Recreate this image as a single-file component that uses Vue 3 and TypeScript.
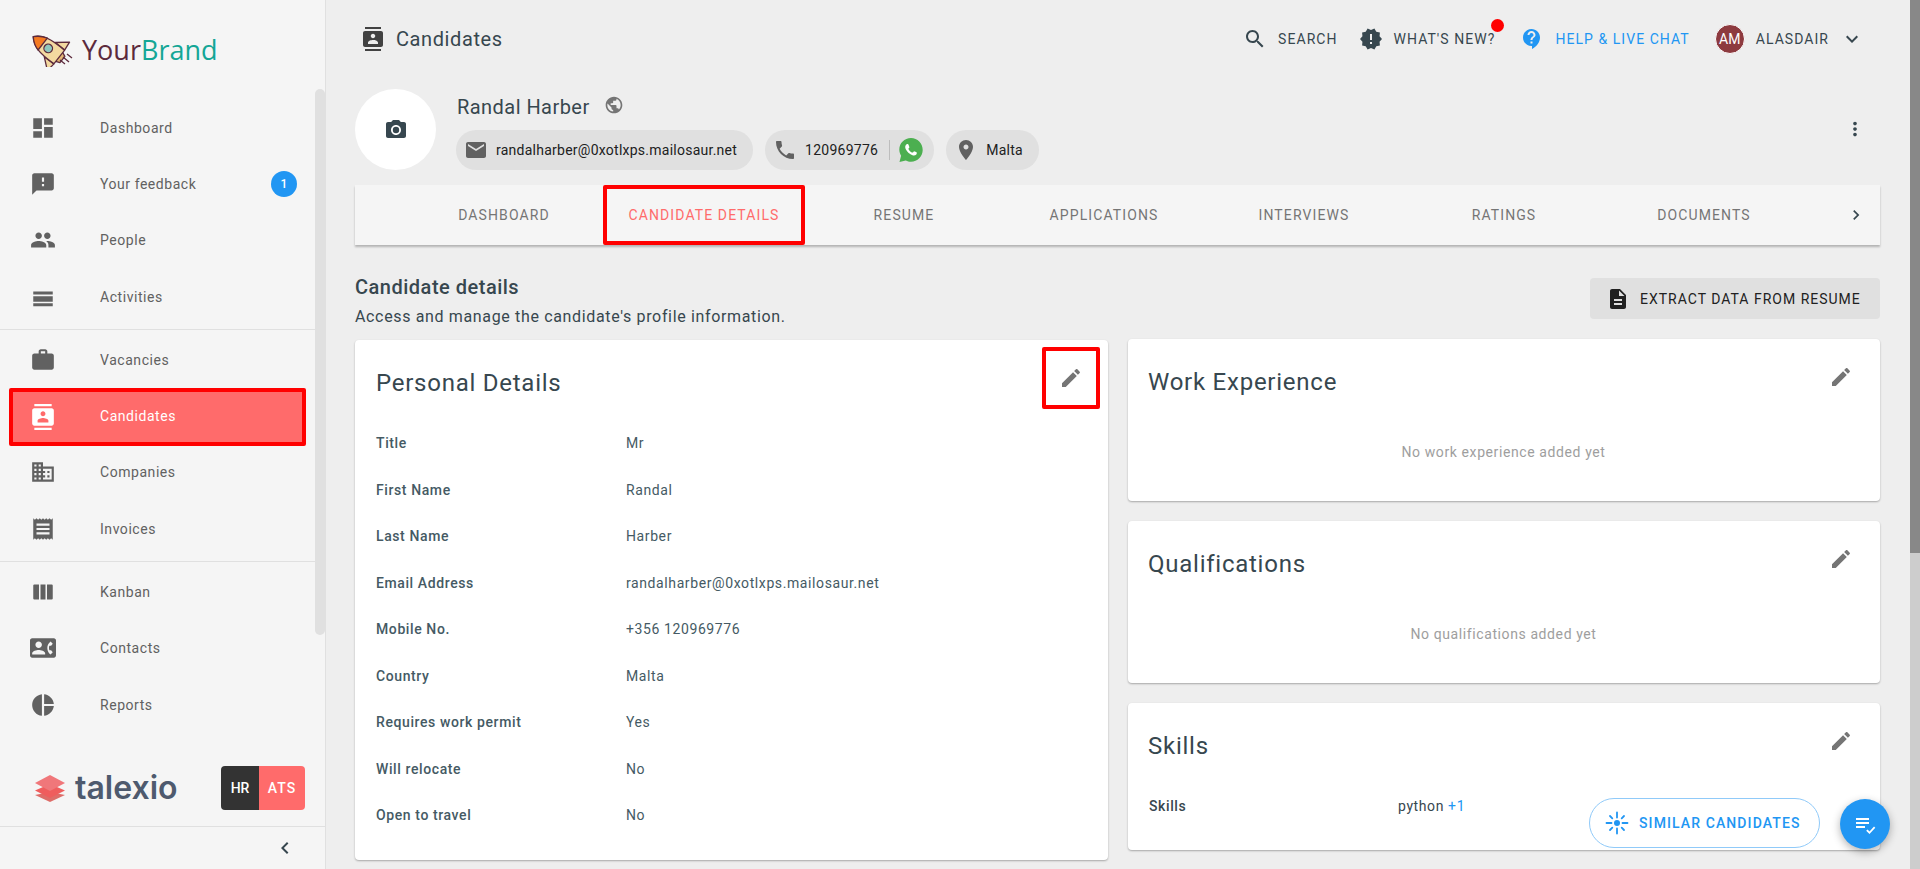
<script setup lang="ts">
type Row = { label: string; value: string }

const navGroups = [
  [
    { label: 'Dashboard', icon: 'M3 13h8V3H3v10zm0 8h8v-6H3v6zm10 0h8V11h-8v10zm0-18v6h8V3h-8z' },
    { label: 'Your feedback', icon: 'M20 2H4c-1.1 0-2 .9-2 2v18l4-4h14c1.1 0 2-.9 2-2V4c0-1.1-.9-2-2-2zm-7 12h-2v-2h2v2zm0-4h-2V6h2v4z', badge: 1 },
    { label: 'People', icon: 'M16 11c1.66 0 2.99-1.34 2.99-3S17.66 5 16 5s-3 1.34-3 3 1.34 3 3 3zm-8 0c1.66 0 2.99-1.34 2.99-3S9.66 5 8 5 5 6.34 5 8s1.34 3 3 3zm0 2c-2.33 0-7 1.17-7 3.5V19h14v-2.5c0-2.33-4.67-3.5-7-3.5zm8 0c-.29 0-.62.02-.97.05 1.16.84 1.97 1.97 1.97 3.45V19h6v-2.5c0-2.33-4.67-3.5-7-3.5z' },
    { label: 'Activities', icon: 'M3 7h18v2.6H3zM3 11.2h18v5.2H3zM3 17.7h18v2.8H3z' },
  ],
  [
    { label: 'Vacancies', icon: 'M20 6h-4V4c0-1.11-.89-2-2-2h-4c-1.11 0-2 .89-2 2v2H4c-1.11 0-2 .89-2 2v11c0 1.11.89 2 2 2h16c1.11 0 2-.89 2-2V8c0-1.11-.89-2-2-2zm-6 0h-4V4h4v2z' },
    { label: 'Candidates', icon: 'M20 0H4v2h16V0zM4 24h16v-2H4v2zM20 4H4c-1.1 0-2 .9-2 2v12c0 1.1.9 2 2 2h16c1.1 0 2-.9 2-2V6c0-1.1-.9-2-2-2zm-8 2.75c1.24 0 2.25 1.01 2.25 2.25s-1.01 2.25-2.25 2.25S9.75 10.24 9.75 9 10.76 6.75 12 6.75zM17 17H7v-1.5c0-1.67 3.33-2.5 5-2.5s5 .83 5 2.5V17z', active: true },
    { label: 'Companies', icon: 'M12 7V3H2v18h20V7H12zM6 19H4v-2h2v2zm0-4H4v-2h2v2zm0-4H4V9h2v2zm0-4H4V5h2v2zm4 12H8v-2h2v2zm0-4H8v-2h2v2zm0-4H8V9h2v2zm0-4H8V5h2v2zm10 12h-8v-2h2v-2h-2v-2h2v-2h-2V9h8v10zm-2-8h-2v2h2v-2zm0 4h-2v2h2v-2z' },
    { label: 'Invoices', icon: 'M21 2l-1.5 1.5L18 2l-1.5 1.5L15 2l-1.5 1.5L12 2l-1.5 1.5L9 2 7.5 3.5 6 2 4.5 3.5 3 2v20l1.5-1.5L6 22l1.5-1.5L9 22l1.5-1.5L12 22l1.5-1.5L15 22l1.5-1.5L18 22l1.5-1.5L21 22V2zm-3 15H6v-2h12v2zm0-4H6v-2h12v2zm0-4H6V7h12v2z' },
  ],
  [
    { label: 'Kanban', icon: 'M4 5h4.3v14H4a1 1 0 0 1-1-1V6a1 1 0 0 1 1-1zm5.7 0h4.6v14H9.7V5zm6 0H20a1 1 0 0 1 1 1v12a1 1 0 0 1-1 1h-4.3V5z' },
    { label: 'Contacts', icon: 'M22 3H2C.9 3 0 3.9 0 5v14c0 1.1.9 2 2 2h20c1.1 0 1.99-.9 1.99-2L24 5c0-1.1-.9-2-2-2zM8 6c1.66 0 3 1.34 3 3s-1.34 3-3 3-3-1.34-3-3 1.34-3 3-3zm6 12H2v-1c0-2 4-3.1 6-3.1s6 1.1 6 3.1v1zm3.85-4h1.64L21 16l-1.99 1.99c-1.31-.98-2.28-2.38-2.73-3.99-.18-.64-.28-1.31-.28-2s.1-1.36.28-2c.45-1.62 1.42-3.01 2.73-3.99L21 8l-1.51 2h-1.64c-.22.63-.35 1.3-.35 2s.13 1.37.35 2z' },
    { label: 'Reports', icon: 'M11 2v20c-5.07-.5-9-4.79-9-10s3.93-9.5 9-10zm2.03 0v8.99H22c-.47-4.74-4.24-8.52-8.97-8.99zm0 11.01V22c4.74-.47 8.5-4.25 8.97-8.99h-8.97z' },
  ],
]

const tabs = ['Dashboard', 'Candidate details', 'Resume', 'Applications', 'Interviews', 'Ratings', 'Documents']

const personal: Row[] = [
  { label: 'Title', value: 'Mr' },
  { label: 'First Name', value: 'Randal' },
  { label: 'Last Name', value: 'Harber' },
  { label: 'Email Address', value: 'randalharber@0xotlxps.mailosaur.net' },
  { label: 'Mobile No.', value: '+356 120969776' },
  { label: 'Country', value: 'Malta' },
  { label: 'Requires work permit', value: 'Yes' },
  { label: 'Will relocate', value: 'No' },
  { label: 'Open to travel', value: 'No' },
]

const pencil = 'M3 17.25V21h3.75L17.81 9.94l-3.75-3.75L3 17.25zM20.71 7.04c.39-.39.39-1.02 0-1.41l-2.34-2.34c-.39-.39-1.02-.39-1.41 0l-1.83 1.83 3.75 3.75 1.83-1.83z'
const candidatesIcon = navGroups[1][1].icon
</script>

<template>
  <div class="page">
    <aside class="sidebar">
      <div class="brand">
        <svg class="rocket" viewBox="0 0 44 34" width="44" height="34">
          <g transform="translate(19 16) rotate(-52)" stroke="#5c2a3c" stroke-width="1.3" stroke-linejoin="round">
            <path d="M9 1l9 11-9 1zM-9 1l-9 11 9 1z" fill="#f3d9a0" />
            <path d="M-6 12h12l-2 5h-8z" fill="#e6b877" />
            <path d="M0-20C7-14 9.5-6 8.5 13h-17C-9.5-6-7-14 0-20z" fill="#f3d9a0" />
            <path d="M0-20C4-16.5 6.3-12.5 7.5-8h-15C-6.3-12.5-4-16.5 0-20z" fill="#f47a21" />
            <circle cy="-1" r="4.3" fill="#8fc7bd" />
          </g>
          <path d="M33 24l6 5M37 21l5 4M30 27l5 4" stroke="#5c2a3c" stroke-width="1.3" fill="none" />
        </svg>
        <span class="brand-name"><span class="your">Your</span><span class="name">Brand</span></span>
      </div>

      <div class="nav-wrap">
        <nav class="nav">
          <div v-for="(group, i) in navGroups" :key="i" class="nav-group">
            <a v-for="item in group" :key="item.label" class="nav-item" :class="{ active: item.active }">
              <svg class="nav-icon" viewBox="0 0 24 24"><path :d="item.icon" /></svg>
              <span class="nav-label">{{ item.label }}</span>
              <span v-if="item.badge" class="badge">{{ item.badge }}</span>
            </a>
          </div>
        </nav>
        <div class="side-scroll" />
      </div>

      <div class="side-foot">
        <div class="talexio">
          <svg viewBox="0 0 32 28" width="32" height="28">
            <path d="M16 18l15 3-15 7L1 21z" fill="#d9534f" opacity=".85" />
            <path d="M16 10l15 6.5L16 24 1 16.5z" fill="#ef5d5d" />
            <path d="M16 1l15 8-15 8L1 9z" fill="#f0777a" />
          </svg>
          <span>talexio</span>
        </div>
        <div class="switch"><span class="hr">HR</span><span class="ats">ATS</span></div>
      </div>
      <div class="collapse">
        <svg viewBox="0 0 24 24" width="24" height="24"><path d="M15.41 7.41 14 6l-6 6 6 6 1.41-1.41L10.83 12z" fill="#37474f" /></svg>
      </div>
    </aside>

    <main class="main">
      <header class="topbar">
        <div class="page-title">
          <svg viewBox="0 0 24 24" width="24" height="24"><path :d="candidatesIcon" fill="#424242" /></svg>
          <span>Candidates</span>
        </div>
        <div class="top-actions">
          <a class="top-link search">
            <svg viewBox="0 0 24 24" width="24" height="24"><path d="M15.5 14h-.79l-.28-.27C15.41 12.59 16 11.11 16 9.5 16 5.91 13.09 3 9.5 3S3 5.91 3 9.5 5.91 16 9.5 16c1.61 0 3.09-.59 4.23-1.57l.27.28v.79l5 4.99L20.49 19l-4.99-5zm-6 0C7.01 14 5 11.99 5 9.5S7.01 5 9.5 5 14 7.01 14 9.5 11.99 14 9.5 14z" fill="#37474f" /></svg>
            Search
          </a>
          <a class="top-link news">
            <svg viewBox="0 0 24 24" width="24" height="24"><path d="M23 12l-2.44-2.79.34-3.69-3.61-.82-1.89-3.2L12 2.96 8.6 1.5 6.71 4.69 3.1 5.5l.34 3.7L1 12l2.44 2.79-.34 3.7 3.61.82L8.6 22.5l3.4-1.47 3.4 1.46 1.89-3.19 3.61-.82-.34-3.69L23 12zm-10 5h-2v-2h2v2zm0-4h-2V7h2v6z" fill="#37474f" /></svg>
            What's new?
            <span class="dot" />
          </a>
          <a class="top-link help">
            <svg viewBox="0 0 24 24" width="24" height="24"><path d="M11.5 2C6.81 2 3 5.81 3 10.5S6.81 19 11.5 19h.5v3c4.86-2.34 8-7 8-11.5C20 5.81 16.19 2 11.5 2zm1 14.5h-2v-2h2v2zm0-3.5h-2c0-3.25 3-3 3-5 0-1.1-.9-2-2-2s-2 .9-2 2h-2c0-2.21 1.79-4 4-4s4 1.79 4 4c0 2.5-3 2.75-3 5z" fill="#2196f3" /></svg>
            Help &amp; live chat
          </a>
          <a class="top-link user">
            <span class="avatar">AM</span>
            Alasdair
            <svg viewBox="0 0 24 24" width="24" height="24"><path d="M16.59 8.59 12 13.17 7.41 8.59 6 10l6 6 6-6z" fill="#37474f" /></svg>
          </a>
        </div>
      </header>

      <section class="profile">
        <div class="photo">
          <svg viewBox="0 0 24 24" width="24" height="24"><circle cx="12" cy="12" r="3.2" fill="#37474f" /><path d="M9 2 7.17 4H4c-1.1 0-2 .9-2 2v12c0 1.1.9 2 2 2h16c1.1 0 2-.9 2-2V6c0-1.1-.9-2-2-2h-3.17L15 2H9zm3 15c-2.76 0-5-2.24-5-5s2.24-5 5-5 5 2.24 5 5-2.24 5-5 5z" fill="#37474f" /></svg>
        </div>
        <div class="profile-info">
          <div class="profile-name">
            <span>Randal Harber</span>
            <svg viewBox="0 0 24 24" width="20" height="20"><path d="M12 2C6.48 2 2 6.48 2 12s4.48 10 10 10 10-4.48 10-10S17.52 2 12 2zm-1 17.93c-3.95-.49-7-3.85-7-7.93 0-.62.08-1.21.21-1.79L9 15v1c0 1.1.9 2 2 2v1.93zm6.9-2.54c-.26-.81-1-1.39-1.9-1.39h-1v-3c0-.55-.45-1-1-1H8v-2h2c.55 0 1-.45 1-1V7h2c1.1 0 2-.9 2-2v-.41c2.93 1.19 5 4.06 5 7.41 0 2.08-.8 3.97-2.1 5.39z" fill="#757575" /></svg>
          </div>
          <div class="chips">
            <span class="chip">
              <svg viewBox="0 0 24 24" width="24" height="24"><path d="M20 4H4c-1.1 0-1.99.9-1.99 2L2 18c0 1.1.9 2 2 2h16c1.1 0 2-.9 2-2V6c0-1.1-.9-2-2-2zm0 4-8 5-8-5V6l8 5 8-5v2z" fill="#616161" /></svg>
              randalharber@0xotlxps.mailosaur.net
            </span>
            <span class="chip">
              <svg viewBox="0 0 24 24" width="24" height="24"><path d="M6.62 10.79c1.44 2.83 3.76 5.14 6.59 6.59l2.2-2.2c.27-.27.67-.36 1.02-.24 1.12.37 2.33.57 3.57.57.55 0 1 .45 1 1V20c0 .55-.45 1-1 1-9.39 0-17-7.61-17-17 0-.55.45-1 1-1h3.5c.55 0 1 .45 1 1 0 1.25.2 2.45.57 3.57.11.35.03.74-.25 1.02l-2.2 2.2z" fill="#616161" /></svg>
              120969776
              <span class="chip-sep" />
              <svg class="wa" viewBox="0 0 26 26" width="26" height="26"><path d="M13 1C6.4 1 1.3 6.2 1.3 12.6c0 2.3.7 4.4 1.8 6.2L1.5 25l6.3-1.6c1.6.9 3.3 1.3 5.2 1.3 6.5 0 11.7-5.3 11.7-11.8S19.5 1 13 1z" fill="#4caf50" /><path d="M9.3 7c-.4 0-.9.2-1.3.7-.9 1-1.1 2.8-.2 4.6 1.4 2.8 4 5 6.7 5.9 1.7.5 3 0 3.8-.8.5-.6.6-1.5.5-1.9-.1-.3-2.3-1.3-2.7-1.3-.5 0-1 1.3-1.5 1.4-.5.1-3.3-1.5-4.2-3.7 0-.6 1-1.1 1-1.7 0-.4-.9-2.7-1.2-3-.2-.2-.6-.2-.9-.2z" fill="#fff" /></svg>
            </span>
            <span class="chip">
              <svg viewBox="0 0 24 24" width="24" height="24"><path d="M12 2C8.13 2 5 5.13 5 9c0 5.25 7 13 7 13s7-7.75 7-13c0-3.87-3.13-7-7-7zm0 9.5c-1.38 0-2.5-1.12-2.5-2.5s1.12-2.5 2.5-2.5 2.5 1.12 2.5 2.5-1.12 2.5-2.5 2.5z" fill="#616161" /></svg>
              Malta
            </span>
          </div>
        </div>
        <svg class="more" viewBox="0 0 24 24" width="22" height="22"><path d="M12 8c1.1 0 2-.9 2-2s-.9-2-2-2-2 .9-2 2 .9 2 2 2zm0 2c-1.1 0-2 .9-2 2s.9 2 2 2 2-.9 2-2-.9-2-2-2zm0 6c-1.1 0-2 .9-2 2s.9 2 2 2 2-.9 2-2-.9-2-2-2z" fill="#37474f" /></svg>
      </section>

      <div class="tabs">
        <div class="tab-list">
          <a v-for="tab in tabs" :key="tab" class="tab" :class="{ active: tab === 'Candidate details' }">{{ tab }}</a>
        </div>
        <svg class="tab-next" viewBox="0 0 24 24" width="20" height="20"><path d="M10 6 8.59 7.41 13.17 12l-4.58 4.59L10 18l6-6z" fill="#37474f" /></svg>
      </div>

      <div class="section-head">
        <div>
          <h2>Candidate details</h2>
          <p>Access and manage the candidate's profile information.</p>
        </div>
        <button type="button" class="extract">
          <svg viewBox="0 0 24 24" width="24" height="24"><path d="M14 2H6c-1.1 0-1.99.9-1.99 2L4 20c0 1.1.89 2 1.99 2H18c1.1 0 2-.9 2-2V8l-6-6zm2 16H8v-2h8v2zm0-4H8v-2h8v2zm-3-5V3.5L18.5 9H13z" fill="#212121" /></svg>
          Extract data from resume
        </button>
      </div>

      <div class="cards">
        <article class="card personal">
          <div class="card-head">
            <h3>Personal Details</h3>
            <span class="edit-mark"><svg viewBox="0 0 24 24" width="24" height="24"><path :d="pencil" fill="#757575" /></svg></span>
          </div>
          <dl class="rows">
            <div v-for="row in personal" :key="row.label" class="row">
              <dt>{{ row.label }}</dt>
              <dd>{{ row.value }}</dd>
            </div>
          </dl>
        </article>

        <div class="right-col">
          <article class="card side-card">
            <div class="card-head">
              <h3>Work Experience</h3>
              <svg viewBox="0 0 24 24" width="24" height="24"><path :d="pencil" fill="#757575" /></svg>
            </div>
            <p class="empty">No work experience added yet</p>
          </article>
          <article class="card side-card">
            <div class="card-head">
              <h3>Qualifications</h3>
              <svg viewBox="0 0 24 24" width="24" height="24"><path :d="pencil" fill="#757575" /></svg>
            </div>
            <p class="empty">No qualifications added yet</p>
          </article>
          <article class="card side-card skills">
            <div class="card-head">
              <h3>Skills</h3>
              <svg viewBox="0 0 24 24" width="24" height="24"><path :d="pencil" fill="#757575" /></svg>
            </div>
            <div class="skill-row">
              <span class="skill-label">Skills</span>
              <span class="skill-val">python <em>+1</em></span>
            </div>
          </article>
        </div>
      </div>
    </main>

    <div class="page-scroll"><div class="page-thumb" /></div>

    <button type="button" class="similar">
      <svg viewBox="0 0 24 24" width="24" height="24" fill="none" stroke="#2196f3" stroke-width="1.8" stroke-linecap="round">
        <path d="M12 1.5v5M12 17.5v5M1.5 12h5M17.5 12h5M5 5l2.3 2.3M16.7 16.7 19 19M19 5l-2.3 2.3M7.3 16.7 5 19" />
        <circle cx="12" cy="12" r="3" fill="#2196f3" stroke="none" />
      </svg>
      Similar candidates
    </button>
    <button type="button" class="fab">
      <svg viewBox="0 0 24 24" width="24" height="24"><path d="M3 6h13v2H3zM3 10h13v2H3zM3 14h9v2H3zM14.5 17.5l2 2 4.5-5 1.3 1.3-5.8 6.2-3.3-3.3z" fill="#fff" /></svg>
    </button>
  </div>
</template>

<style>
html, body { margin: 0; height: 100%; overflow: hidden; }
</style>

<style scoped>
.page { position: relative; display: flex; height: 869px; overflow: hidden; background: #eee; font-family: Roboto, "Liberation Sans", sans-serif; color: #37474f; }
.sidebar { width: 325px; flex: none; display: flex; flex-direction: column; background: #f5f5f5; border-right: 1px solid #e0e0e0; }
.brand { height: 99.5px; flex: none; display: flex; align-items: center; gap: 8px; padding-left: 30px; box-sizing: border-box; }
.brand-name { font-family: "Open Sans", sans-serif; font-size: 27px; line-height: 1; }
.your { color: #5c2a3c; }
.name { color: #14a696; }
.nav-wrap { position: relative; flex: 1; min-height: 0; }
.nav-group { border-bottom: 1px solid #e0e0e0; width: 315px; padding: 2px 0 4px; }
.nav-group:first-child { padding-top: 0; }
.nav-group:last-child { border-bottom: 0; }
.nav-item { position: relative; display: flex; align-items: center; height: 56.3px; padding-left: 30px; box-sizing: border-box; color: #616161; font-size: 14px; letter-spacing: .55px; }
.nav-item.active { height: 58px; margin: 0 9px -1.7px; padding-left: 17px; background: #ff6b6b; color: #fff; border: 4px solid #f00; border-radius: 2px; }
.nav-icon { width: 26px; height: 26px; fill: #616161; flex: none; }
.nav-item.active .nav-icon { fill: #fff; }
.nav-label { margin-left: 44px; }
.nav-item.active .nav-label { margin-top: -1px; }
.badge { position: absolute; right: 18px; top: 15px; width: 26px; height: 26px; border-radius: 50%; background: #2196f3; color: #fff; font-size: 12px; font-weight: 500; letter-spacing: 0; display: flex; align-items: center; justify-content: center; }
.side-scroll { position: absolute; right: 0; top: -11px; width: 10px; height: 546px; background: #e0e0e0; border-radius: 5px; }
.side-foot { height: 94px; flex: none; display: flex; align-items: center; justify-content: space-between; padding: 16px 20px 0 34px; box-sizing: border-box; border-bottom: 1px solid #e0e0e0; }
.talexio { display: flex; align-items: center; gap: 9px; font-family: Inter, sans-serif; font-weight: 600; font-size: 32px; color: #4e5a6e; }
.switch { display: flex; height: 44px; border-radius: 4px; overflow: hidden; font-size: 14px; font-weight: 500; color: #fff; }
.hr, .ats { display: flex; align-items: center; justify-content: center; }
.hr { width: 38px; background: #333; }
.ats { width: 46px; background: #ff6b6b; letter-spacing: 1px; }
.collapse { height: 42px; flex: none; display: flex; align-items: center; justify-content: flex-end; padding-right: 28px; }
.main { flex: 1; min-width: 0; padding: 0 40px 0 29px; }
.topbar { height: 78px; display: flex; align-items: center; justify-content: space-between; padding-right: 16px; }
.page-title { display: flex; align-items: center; gap: 11px; padding-left: 6px; font-size: 20px; letter-spacing: .6px; }
.top-actions { display: flex; align-items: center; color: #37474f; }
.top-link { position: relative; display: flex; align-items: center; gap: 11px; font-size: 14px; letter-spacing: 1.05px; text-transform: uppercase; }
.news { margin-left: 21px; }
.help { margin-left: 25px; color: #2196f3; }
.user { margin-left: 25px; }
.dot { position: absolute; right: -9px; top: -8px; width: 13px; height: 13px; border-radius: 50%; background: #f00; }
.avatar { width: 28px; height: 28px; border: 1px solid #fff; border-radius: 50%; background: #8d3a3f; color: #fff; font-size: 14px; letter-spacing: 0; display: flex; align-items: center; justify-content: center; }
.profile { display: flex; align-items: flex-start; height: 107px; position: relative; }
.photo { width: 81px; height: 81px; margin-top: 11px; border-radius: 50%; background: #fff; display: flex; align-items: center; justify-content: center; flex: none; }
.profile-info { margin: 9px 0 0 21px; flex: 1; }
.profile-name { display: flex; align-items: center; gap: 14px; font-size: 20px; letter-spacing: .45px; height: 40px; }
.profile-name svg { margin-bottom: 5px; }
.chips { display: flex; gap: 12px; margin: 3px 0 0 -1px; }
.chip { display: inline-flex; align-items: center; gap: 8px; height: 40px; padding: 0 16px 0 8px; border-radius: 20px; background: #e0e0e0; color: #212121; font-size: 14px; letter-spacing: .25px; }
.chip-sep { width: 1px; height: 20px; background: #bdbdbd; margin-left: 3px; }
.wa { margin-right: -6px; }
.more { position: absolute; right: 14px; top: 40px; }
.tabs { position: relative; display: flex; align-items: center; height: 60px; background: #f5f5f5; box-shadow: 0 2px 2px rgba(0, 0, 0, .25); }
.tab-list { display: flex; flex: 1; height: 100%; padding-left: 49px; }
.tab { display: flex; align-items: center; justify-content: center; height: 100%; width: 200px; box-sizing: border-box; font-size: 14px; letter-spacing: 1.1px; color: #757575; text-transform: uppercase; flex: none; }
.tab.active { width: 202px; margin: 0 -1px; color: #ff6b6b; border: 4px solid #f00; border-radius: 2px; }
.tab-next { position: absolute; right: 14px; top: 20px; }
.section-head { display: flex; align-items: flex-start; justify-content: space-between; height: 95px; box-sizing: border-box; }
.section-head h2 { margin: 27px 0 0; font-size: 20px; font-weight: 500; line-height: 30px; letter-spacing: .5px; }
.section-head p { margin: 4px 0 0; font-size: 16px; line-height: 22px; letter-spacing: .65px; }
.extract { display: flex; align-items: center; gap: 10px; height: 41px; width: 290px; margin-top: 33px; padding: 0 0 0 16px; box-sizing: border-box; border: 0; border-radius: 4px; background: #e0e0e0; color: #212121; font-family: inherit; font-size: 14px; text-transform: uppercase; letter-spacing: 1px; }
.cards { display: flex; gap: 20px; align-items: flex-start; }
.card { background: #fff; border-radius: 4px; box-shadow: 0 1px 2px rgba(0, 0, 0, .3); box-sizing: border-box; }
.personal { width: 753px; height: 520px; padding: 0 20px 0 21px; }
.right-col { flex: 1; display: flex; flex-direction: column; gap: 20px; margin-top: -1px; }
.card-head { display: flex; justify-content: space-between; align-items: flex-start; height: 79px; padding-top: 25px; box-sizing: border-box; }
.card-head h3 { margin: 0; font-size: 24px; font-weight: 400; line-height: 36px; letter-spacing: .75px; }
.edit-mark { width: 58px; height: 62px; margin: -18px -12px 0 0; display: flex; align-items: flex-start; justify-content: center; padding-top: 15px; box-sizing: border-box; border: 4px solid #f00; border-radius: 2px; flex: none; }
.rows { margin: 1px 0 0; }
.row { display: flex; height: 46.5px; align-items: center; font-size: 14px; letter-spacing: .6px; }
.row dt { width: 250px; font-weight: 500; color: #455a64; }
.row dd { margin: 0; color: #455a64; }
.side-card { height: 162px; padding: 0 21px 0 20px; }
.side-card .card-head { padding-right: 6px; }
.side-card .card-head svg { margin-top: 1px; }
.empty { margin: 0; padding-top: 26px; text-align: center; font-size: 14px; letter-spacing: .6px; color: #9e9e9e; }
.skills { height: 147px; }
.skill-row { display: flex; padding: 16px 0 0 1px; font-size: 14px; letter-spacing: .6px; }
.skill-label { width: 249px; font-weight: 500; }
.skill-val em { font-style: normal; color: #2196f3; }
.page-scroll { position: absolute; right: 0; top: 0; bottom: 0; width: 10px; background: #cdcdcd; }
.page-thumb { height: 553px; background: #888; }
.similar { position: absolute; left: 1589px; top: 798px; display: flex; align-items: center; gap: 10px; height: 50px; width: 231px; padding: 0 0 0 15px; box-sizing: border-box; border: 1px solid #90caf9; border-radius: 25px; background: #fff; color: #2196f3; font-family: inherit; font-size: 14px; font-weight: 500; letter-spacing: 1.1px; text-transform: uppercase; }
.fab { position: absolute; left: 1840px; top: 799px; width: 50px; height: 50px; border: 0; padding: 0; border-radius: 50%; background: #2196f3; display: flex; align-items: center; justify-content: center; box-shadow: 0 3px 8px rgba(0, 0, 0, .3); }
</style>
